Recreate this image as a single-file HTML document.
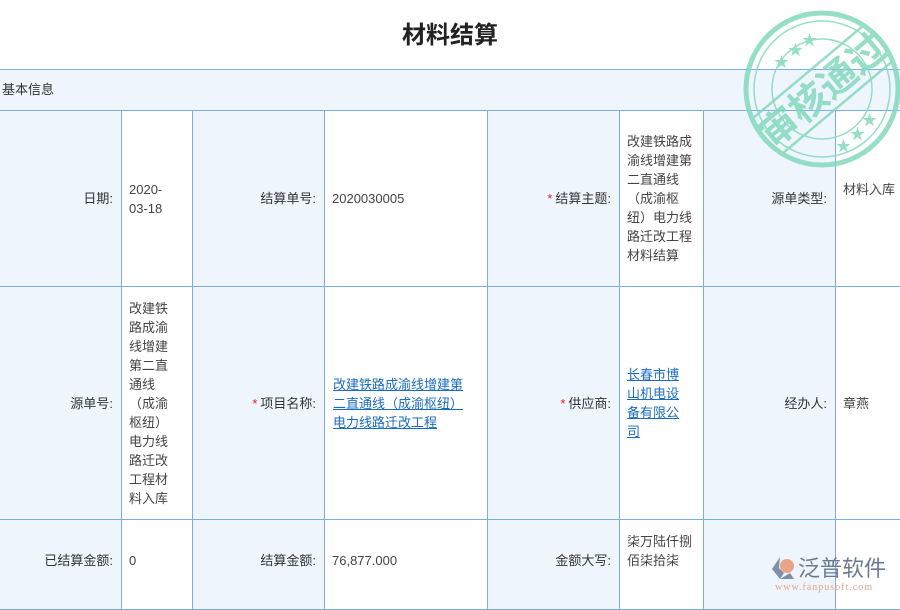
<!DOCTYPE html>
<html><head><meta charset="utf-8"><style>
*{margin:0;padding:0;box-sizing:border-box}
body{width:900px;height:600px;overflow:hidden;background:#fff;position:relative;font-family:"Liberation Sans","Noto Sans CJK SC",sans-serif;font-size:13px;color:#444;line-height:19px}
.c{position:absolute;display:flex;align-items:center;border-right:1px solid #7aaedd;border-bottom:1px solid #7aaedd}
.l{background:#eef5fd;justify-content:flex-end;padding-right:8px;color:#333}
.v{background:#fff;padding-left:7px}
.s{color:#e02020;margin-right:3px}
a{color:#1a6cc0;text-decoration:underline}
h1{position:absolute;top:20px;left:0;width:900px;text-align:center;font-size:24px;font-weight:bold;color:#222;line-height:32px}
</style></head><body>
<h1>材料结算</h1>
<div style="position:absolute;left:0;top:69px;width:900px;height:42px;background:#eef5fd;border-top:1px solid #7aaedd;border-bottom:1px solid #7aaedd;padding-left:2px;line-height:39px;color:#333">基本信息</div>

<div class="c l" style="left:0;top:111px;width:122px;height:176px">日期:</div>
<div class="c v" style="left:122px;top:111px;width:71px;height:176px">2020-<br>03-18</div>
<div class="c l" style="left:193px;top:111px;width:132px;height:176px">结算单号:</div>
<div class="c v" style="left:325px;top:111px;width:163px;height:176px">2020030005</div>
<div class="c l" style="left:488px;top:111px;width:132px;height:176px"><span class="s">*</span>结算主题:</div>
<div class="c v" style="left:620px;top:111px;width:84px;height:176px">改建铁路成<br>渝线增建第<br>二直通线<br>（成渝枢<br>纽）电力线<br>路迁改工程<br>材料结算</div>
<div class="c l" style="left:704px;top:111px;width:132px;height:176px">源单类型:</div>
<div class="c v" style="left:836px;top:111px;width:70px;height:176px;align-items:flex-start;padding-top:69px">材料入库</div>

<div class="c l" style="left:0;top:287px;width:122px;height:233px">源单号:</div>
<div class="c v" style="left:122px;top:287px;width:71px;height:233px">改建铁<br>路成渝<br>线增建<br>第二直<br>通线<br>（成渝<br>枢纽）<br>电力线<br>路迁改<br>工程材<br>料入库</div>
<div class="c l" style="left:193px;top:287px;width:132px;height:233px"><span class="s">*</span>项目名称:</div>
<div class="c v" style="left:325px;top:287px;width:163px;height:233px;padding-left:8px"><a>改建铁路成渝线增建第<br>二直通线（成渝枢纽）<br>电力线路迁改工程</a></div>
<div class="c l" style="left:488px;top:287px;width:132px;height:233px"><span class="s">*</span>供应商:</div>
<div class="c v" style="left:620px;top:287px;width:84px;height:233px"><a>长春市博<br>山机电设<br>备有限公<br>司</a></div>
<div class="c l" style="left:704px;top:287px;width:132px;height:233px">经办人:</div>
<div class="c v" style="left:836px;top:287px;width:70px;height:233px">章燕</div>

<div class="c l" style="left:0;top:520px;width:122px;height:90px;align-items:flex-start;padding-top:31px">已结算金额:</div>
<div class="c v" style="left:122px;top:520px;width:71px;height:90px;align-items:flex-start;padding-top:31px">0</div>
<div class="c l" style="left:193px;top:520px;width:132px;height:90px;align-items:flex-start;padding-top:31px">结算金额:</div>
<div class="c v" style="left:325px;top:520px;width:163px;height:90px;align-items:flex-start;padding-top:31px">76,877.000</div>
<div class="c l" style="left:488px;top:520px;width:132px;height:90px;align-items:flex-start;padding-top:31px">金额大写:</div>
<div class="c v" style="left:620px;top:520px;width:84px;height:90px;align-items:flex-start;padding-top:12px">柒万陆仟捌<br>佰柒拾柒</div>
<div class="c l" style="left:704px;top:520px;width:132px;height:90px"></div>
<div class="c v" style="left:836px;top:520px;width:70px;height:90px"></div>

<svg style="position:absolute;left:740px;top:5px" width="170" height="170" viewBox="0 0 170 170">
<defs><clipPath id="cp"><circle cx="82" cy="84" r="74"/></clipPath></defs>
<g opacity="0.8" stroke="#7dd6b8" fill="none">
<circle cx="82" cy="84" r="76" stroke-width="5"/>
<circle cx="82" cy="84" r="68" stroke-width="1.5"/>
<circle cx="82" cy="84" r="50" stroke-width="1.5"/>
<g transform="rotate(-40 82 84)">
<g clip-path="url(#cp)">
<line x1="-5" y1="62" x2="170" y2="62" stroke-width="2.5"/>
<line x1="-5" y1="108" x2="170" y2="108" stroke-width="2.5"/>
</g>
<text x="82" y="99" text-anchor="middle" font-size="38" font-weight="bold" fill="#7dd6b8" stroke="none" font-family="Noto Sans CJK SC,sans-serif">审核通过</text>
</g>
<g fill="#7dd6b8" stroke="none" font-size="15"><text x="34" y="62">★</text><text x="48" y="50">★</text><text x="62" y="40">★</text><text x="96" y="146">★</text><text x="110" y="134">★</text><text x="122" y="120">★</text></g>
</g></svg>

<div style="position:absolute;left:770px;top:552px;width:128px;height:44px">
<svg width="26" height="26" style="position:absolute;left:0;top:3px" viewBox="0 0 26 26"><path d="M10 2 L2 14 L10 24 L14 18 L9 13 Z" fill="#7f8fa6"/><circle cx="17" cy="11" r="7" fill="#e8a486"/><path d="M10 24 L24 24 L20 18 Z" fill="#7f8fa6"/></svg>
<div style="position:absolute;left:28px;top:0;font-size:22px;line-height:30px;color:#6c7a90;font-family:'Noto Sans CJK SC',sans-serif">泛普软件</div>
<div style="position:absolute;left:5px;top:30px;font-size:10px;line-height:12px;color:#e8a486;font-family:'Liberation Serif',serif;letter-spacing:1px">www.fanpusoft.com</div>
</div>
</body></html>
